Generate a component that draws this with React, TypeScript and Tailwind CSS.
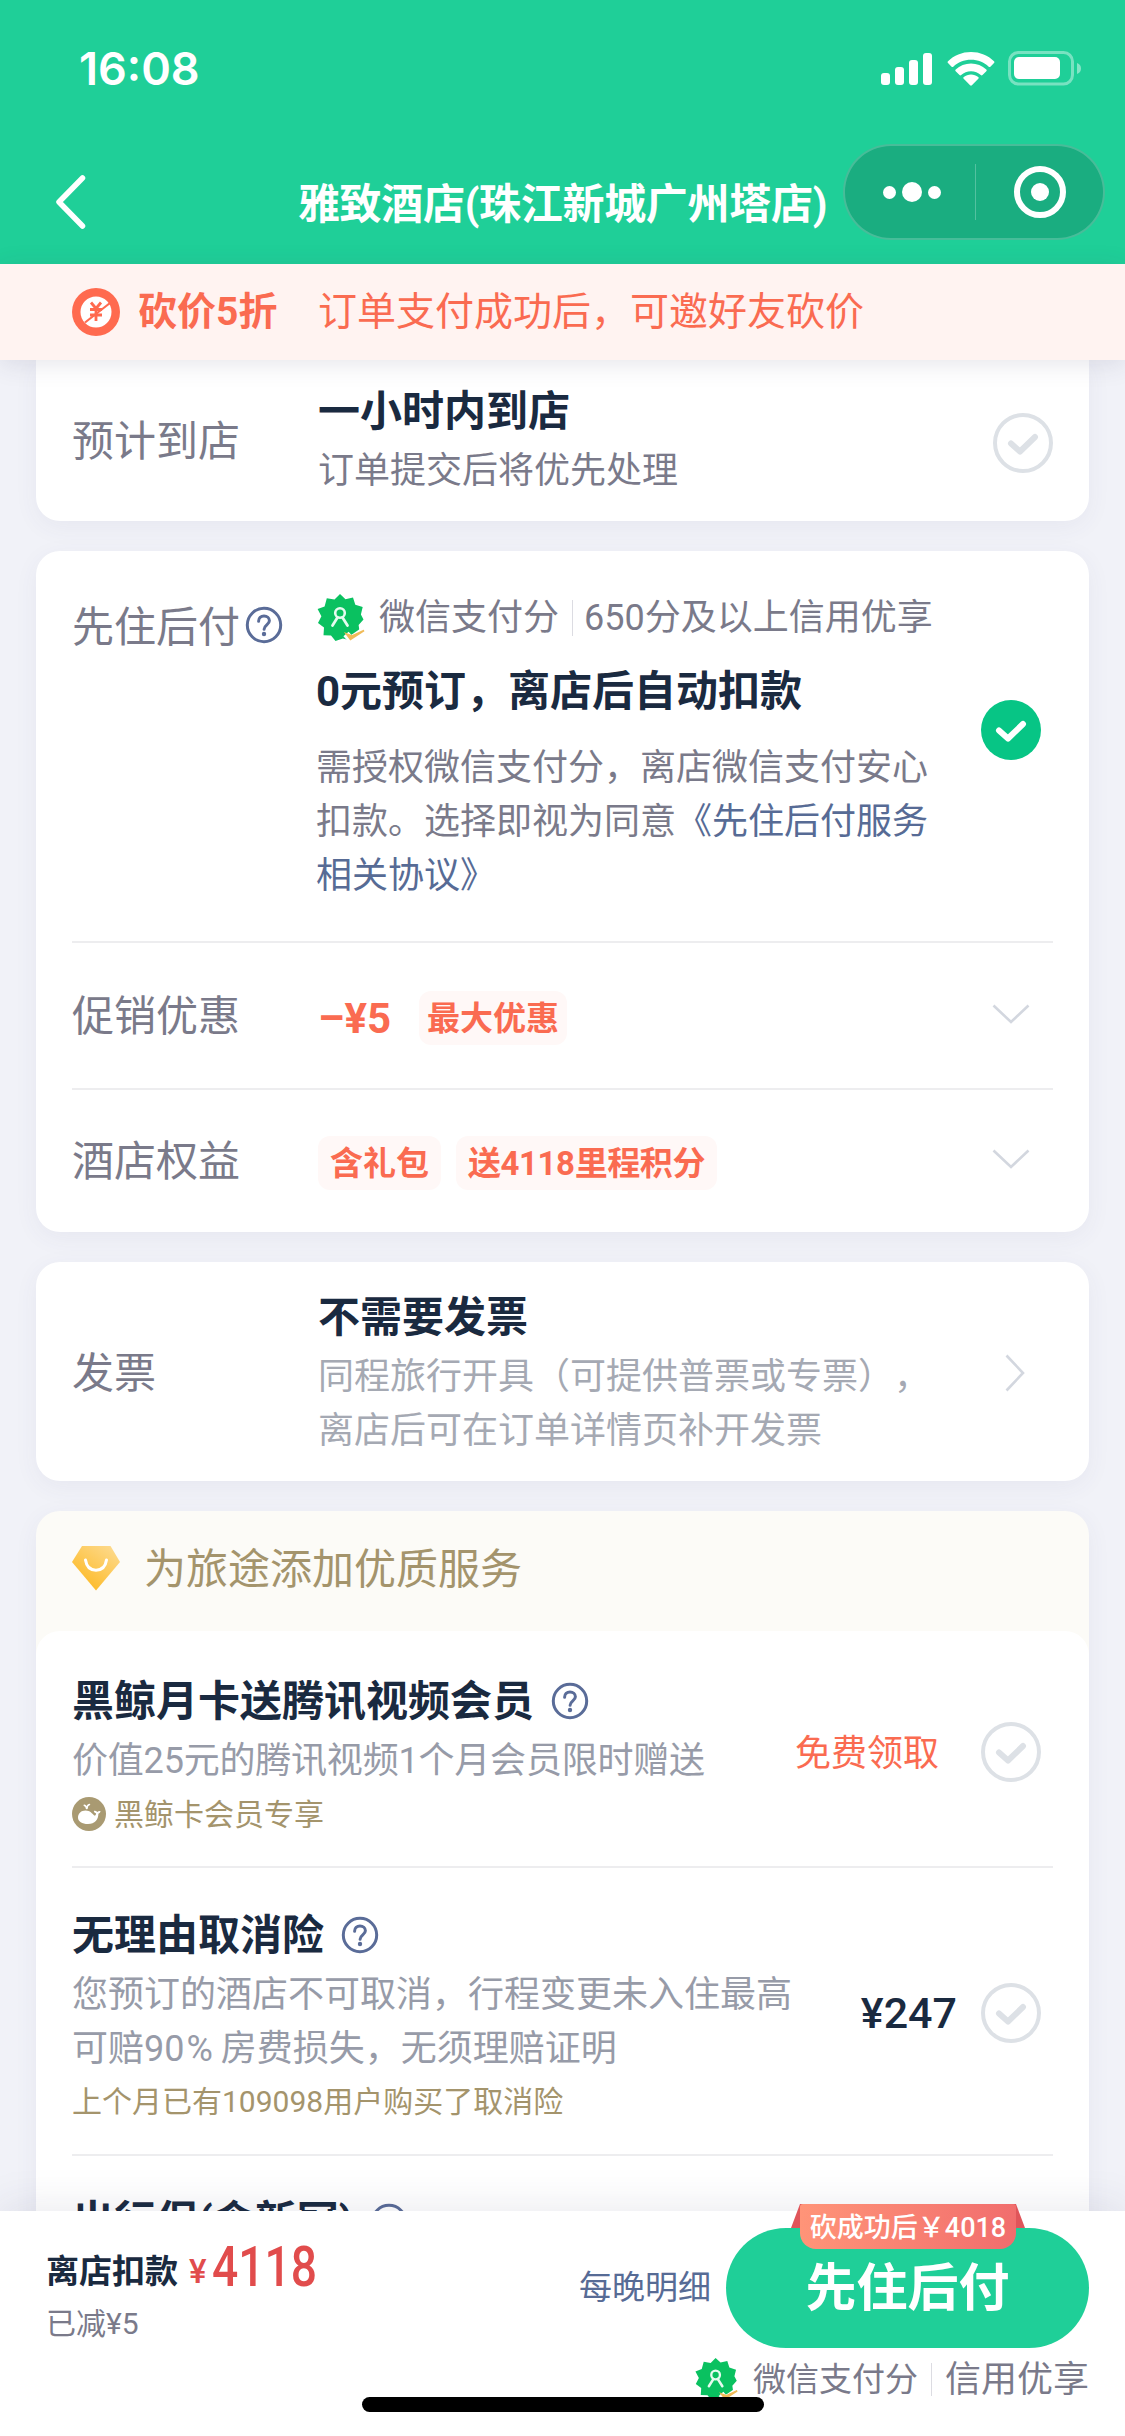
import type { ReactNode } from "react";

const font = "font-[Roboto,'Noto_Sans_CJK_SC',sans-serif]";

function HelpIcon({ className = "" }: { className?: string }) {
  return (
    <svg width="38" height="38" viewBox="0 0 38 38" fill="none" className={`shrink-0 ${className}`}>
      <circle cx="19" cy="19" r="16.700" stroke="#5a6c98" strokeWidth="3" />
      <path d="M13.600 15.200c0-3.200 2.300-5.200 5.400-5.200s5.400 2 5.400 4.800c0 3.900-5.300 4.300-5.300 8.400" stroke="#5a6c98" strokeWidth="3" strokeLinecap="round" />
      <circle cx="19" cy="28" r="2.200" fill="#5a6c98" />
    </svg>
  );
}

function Check({ checked = false }: { checked?: boolean }) {
  return (
    <svg width="60" height="60" viewBox="0 0 60 60" fill="none" className="shrink-0">
      {checked
        ? <circle cx="30" cy="30" r="30" fill="#07c585" />
        : <circle cx="30" cy="30" r="28" stroke="#dde1e6" strokeWidth="4" />}
      <path d="M18 30.500L27 38.500L42 24" stroke={checked ? "#fff" : "#dde1e6"} strokeWidth="6" strokeLinecap="round" strokeLinejoin="round" />
    </svg>
  );
}

function Arrow({ right = false }: { right?: boolean }) {
  return right ? (
    <svg width="20" height="38" viewBox="0 0 20 38" fill="none">
      <path d="M1.500 1.500L18 19L1.500 36.500" stroke="#d3d7df" strokeWidth="2.600" />
    </svg>
  ) : (
    <svg width="38" height="20" viewBox="0 0 38 20" fill="none">
      <path d="M1.500 1.500L19 18L36.500 1.500" stroke="#d3d7df" strokeWidth="2.600" />
    </svg>
  );
}

function PayScore({ size }: { size: number }) {
  return (
    <svg width={size} height={size} viewBox="0 0 50 50" fill="none" className="shrink-0">
      <path
        d="M24 1l5.500 5.200 7.500-1.800 2.300 7.400 7.400 2.300-1.800 7.400 2.600 5-4.900 5.400 1.100 7.500-7.500 2-2.500 5.800-6.800-1.800L19.500 48l-4.500-5.500-7.500-.3.500-7.700-6-4.500 3.400-6.800L1.600 16l7-2.600L10.800 5.300l7.700 1.300z"
        fill="#0ac160"
      />
      <circle cx="24" cy="20" r="4.800" stroke="#e6fbef" strokeWidth="2.600" />
      <path d="M21.500 24.500L16.500 32.500M26.500 24.500L31.500 32.500" stroke="#e6fbef" strokeWidth="2.800" strokeLinecap="round" />
      <path d="M30 41l5 5.500L48 37.500" stroke="#fff" strokeWidth="7" />
      <path d="M30.500 41l4 5.200L48 37.500l-12 5.500z" fill="#f0bb58" stroke="#f0bb58" strokeWidth="1.800" />
    </svg>
  );
}

function Tag({ children, className = "px-[12px]" }: { children: ReactNode; className?: string }) {
  return (
    <span className={`mt-[4px] h-[54px] leading-[55px] rounded-[12px] bg-[#fff8f7] text-[33px] font-bold text-[#fa6b51] whitespace-nowrap ${className}`}>
      {children}
    </span>
  );
}

const card = "mx-[36px] px-[36px] rounded-[24px] bg-white shadow-[0_6px_24px_rgba(60,60,120,0.06)]";
const label = "w-[246px] shrink-0 text-[42px] leading-[54px] text-[#7a7a8a]";
const heading = "text-[42px] leading-[54px] font-bold text-[#1a2a40] whitespace-nowrap";

function StatusBar() {
  return (
    <div className="h-[120px] flex justify-between pt-[41px] pl-[79px] pr-[43px] text-white">
      <span className="font-[Inter] font-semibold text-[45px] leading-[56px]">16:08</span>
      <svg width="201" height="36" viewBox="0 0 201 36" fill="none" className="mt-[10px]">
        <g fill="#fff">
          <rect x="0" y="22" width="9" height="12" rx="3" />
          <rect x="14" y="16" width="9" height="18" rx="3" />
          <rect x="28" y="9" width="9" height="25" rx="3" />
          <rect x="42" y="2" width="9" height="32" rx="3" />
          <path d="M90 1c9 0 17 3.400 23 9.300.6.6.6 1.200 0 1.800l-3.600 3.600c-.5.5-1.100.5-1.700 0C103 11.300 97 8.800 90 8.800s-13 2.500-17.700 6.900c-.6.5-1.200.5-1.700 0L67 12.100c-.6-.6-.6-1.200 0-1.800C73 4.400 81 1 90 1z" />
          <path d="M90 12.500c5.800 0 11.200 2.200 15.300 6 .6.6.6 1.200 0 1.800l-3.800 3.700c-.5.5-1.100.5-1.700 0-2.600-2.400-6-3.800-9.800-3.800s-7.200 1.400-9.800 3.800c-.6.5-1.200.5-1.700 0l-3.800-3.700c-.6-.6-.6-1.200 0-1.800 4.100-3.800 9.500-6 15.300-6z" />
          <path d="M90 23.500c2.700 0 5.200.9 7.200 2.500.7.5.7 1.200.1 1.800l-6.400 6.500c-.6.6-1.200.6-1.800 0l-6.400-6.500c-.6-.6-.6-1.300.1-1.800 2-1.600 4.500-2.500 7.200-2.500z" />
          <rect x="133" y="6" width="46" height="22" rx="5" />
          <path d="M196 12c3 1 4 3 4 5.500s-1 4.500-4 5.500z" opacity=".45" />
        </g>
        <rect x="128.500" y="1.500" width="63" height="31.500" rx="9" stroke="#fff" strokeOpacity=".4" strokeWidth="3" />
      </svg>
    </div>
  );
}

function NavBar() {
  return (
    <div className="h-[144px] relative flex justify-center text-white">
      <svg width="32" height="56" viewBox="0 0 32 56" fill="none" className="absolute left-[54px] top-[54px]">
        <path d="M28.500 4L5 28l23.500 24" stroke="#fff" strokeWidth="5.500" strokeLinecap="round" strokeLinejoin="round" />
      </svg>
      <h1 className="mt-[57px] text-[42px] leading-[56px] font-bold tracking-[-0.3px] whitespace-nowrap">雅致酒店(珠江新城广州塔店)</h1>
      <div className="absolute left-[843px] top-[24px] w-[262px] h-[96px] rounded-full border-2 border-white/20 bg-[#1aad80] flex items-center">
        <div className="w-[130px] pl-[4px] flex items-center justify-center gap-[6px]">
          <i className="size-[13px] rounded-full bg-white" />
          <i className="size-[20px] rounded-full bg-white" />
          <i className="size-[13px] rounded-full bg-white" />
        </div>
        <div className="w-px h-[56px] bg-white/25" />
        <div className="flex-1 flex justify-center">
          <div className="size-[52px] rounded-full border-[6px] border-white flex items-center justify-center">
            <i className="size-[18px] rounded-full bg-white" />
          </div>
        </div>
      </div>
    </div>
  );
}

function Banner() {
  return (
    <div className="relative z-10 h-[96px] bg-[#fff3f1] shadow-[0_4px_24px_rgba(50,50,90,0.12)] pl-[72px] flex items-center text-[39px] text-[#fa6b51] whitespace-nowrap">
      <svg width="48" height="48" viewBox="0 0 48 48" fill="none">
        <circle cx="24" cy="24" r="24" fill="#ff6a4f" />
        <circle cx="24" cy="24" r="15.500" fill="#fff" />
        <path d="M19 14.500l5 6 5-6M18 21.500h12M18 27h12M24 21v12" stroke="#ff6a4f" strokeWidth="2.800" />
        <path d="M13 34.500L38 15" stroke="#ff6a4f" strokeWidth="2.200" />
      </svg>
      <span className="ml-[18px] w-[180px] font-bold">砍价5折</span>
      <span>订单支付成功后，可邀好友砍价</span>
    </div>
  );
}

function PayLater() {
  return (
    <section className={`${card} mt-[30px] h-[681px]`}>
      <div className="h-[390px] flex relative">
        <div className={`${label} pt-[50px] flex whitespace-nowrap`}>
          先住后付
          <HelpIcon className="mt-[5px] ml-[5px]" />
        </div>
        <div className="w-[630px] -ml-[2px] pt-[40px]">
          <div className="h-[54px] flex items-center text-[36px] text-[#7a7a8a] whitespace-nowrap">
            <PayScore size={50} />
            <span className="ml-[13px]">微信支付分</span>
            <i className="w-px h-[36px] ml-[13px] mr-[11px] bg-[#dcdce2]" />
            <span>650分及以上信用优享</span>
          </div>
          <h2 className={`${heading} mt-[20px]`}>0元预订，离店后自动扣款</h2>
          <p className="mt-[22px] w-[620px] text-[36px] leading-[54px] text-[#7a7a8a]">
            需授权微信支付分，离店微信支付安心<br />
            扣款。选择即视为同意<span className="text-[#576b95]">《先住后付服务<br />相关协议》</span>
          </p>
        </div>
        <div className="ml-auto mr-[12px] pt-[149px]"><Check checked /></div>
      </div>
      <div className="h-[149px] border-y-2 border-[#ededef] flex items-center">
        <div className={`${label} pt-[2px]`}>促销优惠</div>
        <span className="pt-[6px] w-[101px] text-[42px] font-bold text-[#fa6b51] whitespace-nowrap">–¥5</span>
        <Tag className="px-[8px]">最大优惠</Tag>
        <div className="ml-auto mr-[23px] pb-[3px]"><Arrow /></div>
      </div>
      <div className="h-[142px] flex items-center">
        <div className={`${label} pt-[1px]`}>酒店权益</div>
        <Tag>含礼包</Tag>
        <Tag className="w-[261px] ml-[15px] text-center tracking-[-0.4px]">送4118里程积分</Tag>
        <div className="ml-auto mr-[23px] pb-[4px]"><Arrow /></div>
      </div>
    </section>
  );
}

function Invoice() {
  return (
    <section className={`${card} mt-[30px] h-[219px] flex items-center`}>
      <div className={`${label} pt-[4px]`}>发票</div>
      <div className="pt-[5px]">
        <h2 className={heading}>不需要发票</h2>
        <p className="mt-[5px] text-[36px] leading-[54px] text-[#a5a9b3] whitespace-nowrap [text-spacing-trim:space-all]">
          同程旅行开具（可提供普票或专票），<br />离店后可在订单详情页补开发票
        </p>
      </div>
      <div className="ml-auto mr-[28px] pt-[3px]"><Arrow right /></div>
    </section>
  );
}

function Diamond() {
  return (
    <svg width="48" height="46" viewBox="0 0 48 46" fill="none">
      <defs>
        <linearGradient id="gem" x1="40" y1="2" x2="14" y2="38" gradientUnits="userSpaceOnUse">
          <stop stopColor="#fdd98a" />
          <stop offset="1" stopColor="#fdbd30" />
        </linearGradient>
      </defs>
      <path d="M10 1h28.500L48 17 24 45.500 0 17z" fill="url(#gem)" />
      <path d="M13.500 15c1 6.500 5 10.200 10.500 10.200S33.500 21.500 34.500 15" stroke="#fff" strokeWidth="3" strokeLinecap="round" />
    </svg>
  );
}

function Whale() {
  return (
    <svg width="34" height="34" viewBox="0 0 34 34" fill="none">
      <circle cx="17" cy="17" r="17" fill="#a99a72" />
      <path d="M6 20.500c0-4.200 3.300-7 7.500-7 4.800 0 6.500 3.200 9.300 5.200 1-.7 1.400-1.500 1.200-2.500-1.300-.4-2-1.200-2.200-2.300 1.500-.2 2.600.1 3.500 1 .9-.8 2-1 3.200-.8-.1 1.400-.9 2.300-2.100 2.700C26.400 22.500 23 27 16 27c-6 0-10-2.500-10-6.500z" fill="#fff" />
      <path d="M14.500 11.500c0-1.800-.8-2.800-2.300-3.300M15 11.500c0-2.300.8-3.600 2.500-4" stroke="#fff" strokeWidth="1.500" strokeLinecap="round" />
    </svg>
  );
}

function Services() {
  return (
    <section className="mx-[36px] mt-[30px] rounded-t-[24px] bg-[#fcfbf7] shadow-[0_6px_24px_rgba(60,60,120,0.06)]">
      <div className="h-[120px] px-[36px] pb-[6px] flex items-center text-[42px] text-[#a4946c]">
        <Diamond />
        <span className="ml-[24px] pt-[2px]">为旅途添加优质服务</span>
      </div>
      <div className="rounded-t-[24px] bg-white px-[36px] h-[700px]">
        <div className="h-[237px] border-b-2 border-[#ededef] flex">
          <div className="pt-[44px]">
            <h2 className={`${heading} flex items-center`}>黑鲸月卡送腾讯视频会员<HelpIcon className="ml-[17px] -mt-[2px]" /></h2>
            <p className="mt-[5px] text-[36px] leading-[54px] tracking-[-0.2px] text-[#979ba8] whitespace-nowrap">价值25元的腾讯视频1个月会员限时赠送</p>
            <div className="h-[52px] flex items-center text-[30px] text-[#a4946c]">
              <Whale /><span className="ml-[8px]">黑鲸卡会员专享</span>
            </div>
          </div>
          <div className="ml-auto mr-[12px] mt-[91px] h-[60px] flex items-center">
            <span className="mr-[42px] pt-[4px] text-[36px] text-[#fa6b51]">免费领取</span>
            <Check />
          </div>
        </div>
        <div className="h-[288px] border-b-2 border-[#ededef] flex">
          <div className="pt-[41px]">
            <h2 className={`${heading} flex items-center`}>无理由取消险<HelpIcon className="ml-[17px] -mt-[2px]" /></h2>
            <p className="mt-[5px] text-[36px] leading-[54px] text-[#979ba8] whitespace-nowrap">
              您预订的酒店不可取消，行程变更未入住最高<br />可赔90<span className="mx-[2px] tracking-[6px]">%</span>房费损失，无须理赔证明
            </p>
            <p className="text-[30px] leading-[52px] text-[#a4946c] whitespace-nowrap">上个月已有109098用户购买了取消险</p>
          </div>
          <div className="ml-auto mr-[12px] mt-[115px] h-[60px] flex items-center">
            <span className="mr-[24px] text-[43px] font-medium text-[#1a2a40]">¥247</span>
            <Check />
          </div>
        </div>
        <h2 className={`${heading} pt-[39px] flex items-center`}>出行保(含新冠)<HelpIcon className="ml-[17px]" /></h2>
      </div>
    </section>
  );
}

function Footer() {
  return (
    <footer className="relative z-10 h-[225px] bg-white shadow-[0_-4px_40px_rgba(50,50,90,0.1)]">
      <div className="flex pl-[46px] pr-[36px]">
        <div className="pt-[27px] whitespace-nowrap">
          <div className="h-[58px] flex items-baseline">
            <span className="-translate-y-[3px] text-[33px] leading-[58px] font-bold text-[#1a2a40]">离店扣款</span>
            <span className="ml-[11px] -translate-y-[3px] text-[33px] font-medium text-[#e14c4c]">¥</span>
            <span className="ml-[5px] w-[104px] text-[55px] leading-[58px] font-medium text-[#e14c4c] origin-left scale-x-[0.84]">4118</span>
          </div>
          <div className="mt-[7px] text-[30px] leading-[42px] text-[#7a7a8a]">已减¥5</div>
        </div>
        <span className="ml-auto pt-[52px] mr-[15px] text-[33px] leading-[50px] text-[#576b95]">每晚明细</span>
        <button className="relative mt-[17px] w-[363px] h-[120px] pt-[3px] rounded-full bg-[#1fcf98] text-white text-[51px] font-bold">
          先住后付
          <span className="absolute left-[65px] -top-[24px] w-[234px] h-[24px] bg-[#e0555a] [clip-path:polygon(9px_0,225px_0,100%_100%,0_100%)]" />
          <span className="absolute left-[74px] -top-[24px] w-[216px] h-[45px] rounded-b-[16px] rounded-t-[3px] bg-linear-to-r from-[#ff9478] to-[#f16d6d] text-[27px] font-medium leading-[49px] text-center whitespace-nowrap">
            砍成功后￥4018
          </span>
        </button>
      </div>
      <div className="h-[60px] pt-[3px] pr-[36px] flex items-center justify-end text-[#7a7a8a] whitespace-nowrap">
        <PayScore size={45} />
        <span className="ml-[14px] text-[33px]">微信支付分</span>
        <i className="w-px h-[33px] mx-[13px] bg-[#dcdce2]" />
        <span className="text-[36px]">信用优享</span>
      </div>
      <div className="absolute left-[362px] top-[186px] w-[402px] h-[15px] rounded-full bg-black" />
    </footer>
  );
}

export default function App() {
  return (
    <div className={`w-[1125px] h-[2436px] overflow-hidden flex flex-col bg-[#f1f2f8] ${font}`} lang="zh-CN">
      <header className="shrink-0 bg-[#1fcf98]">
        <StatusBar />
        <NavBar />
      </header>
      <Banner />
      <main className="flex-1 min-h-0 overflow-hidden">
        <section className={`${card} rounded-t-none h-[161px] flex`}>
          <div className={`${label} pt-[55px]`}>预计到店</div>
          <div className="pt-[25px]">
            <h2 className={heading}>一小时内到店</h2>
            <p className="mt-[5px] text-[36px] leading-[54px] text-[#7a7a8a]">订单提交后将优先处理</p>
          </div>
          <div className="ml-auto pt-[53px]"><Check /></div>
        </section>
        <PayLater />
        <Invoice />
        <Services />
      </main>
      <Footer />
    </div>
  );
}
